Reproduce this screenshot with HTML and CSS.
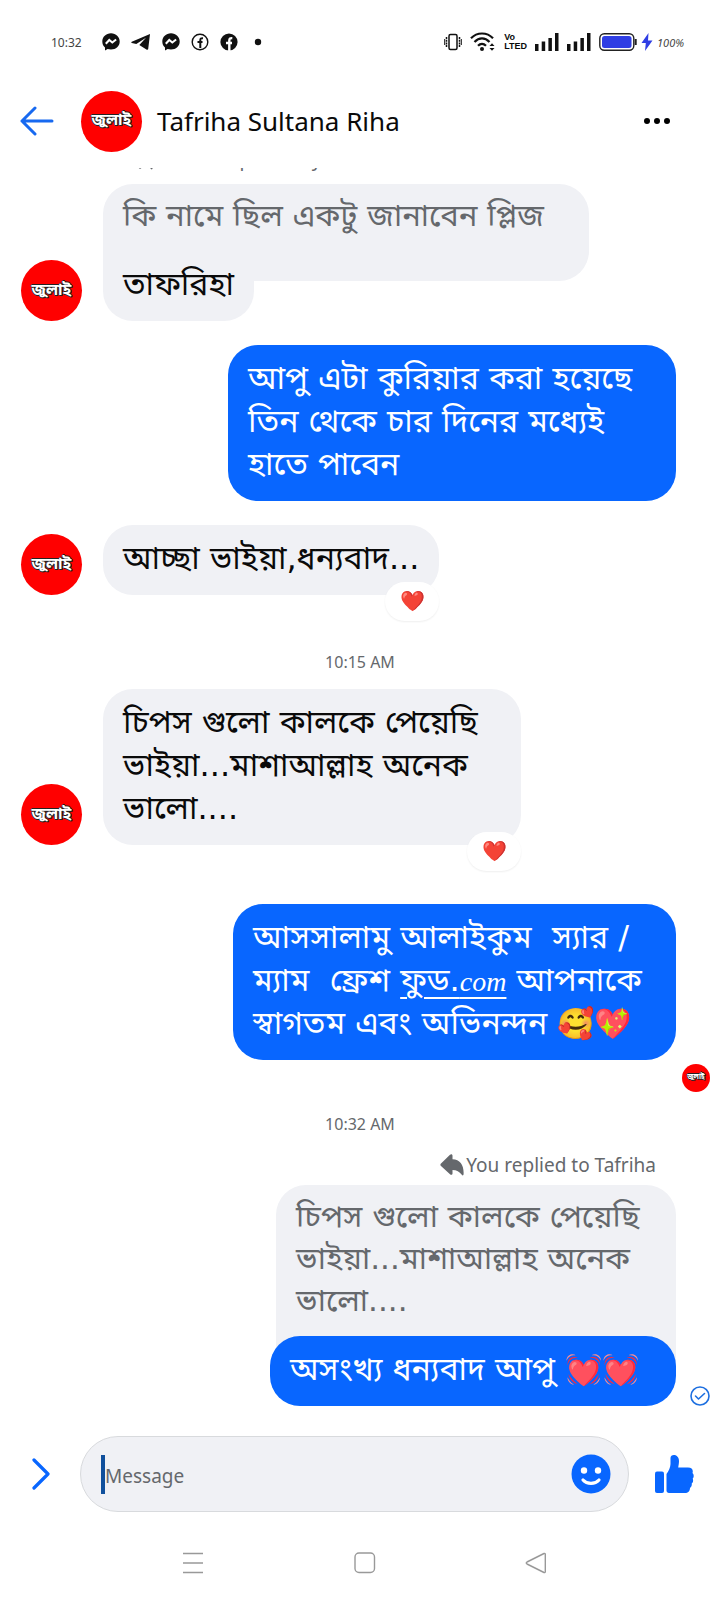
FILE: index.html
```html
<!DOCTYPE html>
<html lang="bn">
<head>
<meta charset="utf-8">
<meta name="viewport" content="width=device-width, initial-scale=1">
<title>Tafriha Sultana Riha</title>
<link rel="stylesheet" href="styles.css">
</head>
<body>
<svg class="defs" width="0" height="0" aria-hidden="true">
  <symbol id="messenger" viewBox="0 0 18 18"><path fill="#111" d="M9 .3C4 .3.3 3.900.3 8.600c0 2.500 1 4.500 2.700 6v2.800l2.600-1.400c1 .3 2.200.5 3.400.5 5 0 8.700-3.500 8.700-8S14 .3 9 .3z"/><path d="M3.800 10.800 7.300 7l3 2.500 3.800-3" fill="none" stroke="#fff" stroke-width="2"/></symbol>
  <symbol id="reply" viewBox="0 0 24 22"><path fill="#65686c" d="M1 9.500 10 .8c1.200-1 2.500-.5 2.500 1v3.400C20 5.500 24 11 23.600 20c0 1.500-1 1.800-1.800.8-2.500-3.300-5-4.600-9.300-4.800v3.200c0 1.600-1.300 2-2.500 1L1 12c-.8-.8-.8-1.700 0-2.500z"/></symbol>
</svg>
<div class="app">
  <div class="status">
    <div class="status-group notices">
      <span class="clock">10:32</span>
      <svg width="18" height="18"><use href="#messenger"/></svg>
      <svg width="20" height="18" viewBox="0 0 20 18"><path fill="#111" d="M19 1 .8 8.800c-.7.3-.6.9 0 1.100l4.500 1.200L15 4.800 8.300 12l7.500 4.700c.8.4 1.200 0 1.400-.7z"/></svg>
      <svg width="18" height="18"><use href="#messenger"/></svg>
      <svg width="18" height="18" viewBox="0 0 18 18"><circle cx="9" cy="9" r="7.800" fill="none" stroke="#111" stroke-width="1.400"/><path d="M9.300 15V7.200c0-1.500.7-2.200 2.700-2M6.500 9h5" fill="none" stroke="#111" stroke-width="2"/></svg>
      <svg width="18" height="18" viewBox="0 0 18 18"><circle cx="9" cy="9" r="8.600" fill="#111"/><path d="M9.300 18V7.400c0-1.700 1-2.400 3-2.200M6 10h6" fill="none" stroke="#fff" stroke-width="2.400"/></svg>
      <svg width="18" height="18" viewBox="0 0 18 18"><circle cx="9" cy="9" r="3.200" fill="#111"/></svg>
    </div>
    <div class="status-group">
      <svg width="18" height="18" viewBox="0 0 18 18"><rect x="5" y="1.500" width="8" height="15" rx="1.500" fill="none" stroke="#111" stroke-width="1.500"/><path d="M2.500 4v10M15.500 4v10" stroke="#111" stroke-width="1.500" stroke-dasharray="2 .7"/><path d="M.7 6v6M17.300 6v6" stroke="#111" stroke-width="1"/></svg>
      <svg width="26" height="20" viewBox="0 0 26 20"><g fill="none" stroke="#111" stroke-width="2.200"><path d="M1 6.300C7-.1 17-.1 23 6.300"/><path d="M4.500 10C9 5.200 15 5.200 19.500 10"/><path d="M8 13.800c2.500-2.600 5.500-2.600 8 0"/></g><circle cx="12" cy="17" r="2" fill="#111"/><path d="m19.500 14 2.500-2.700 2.500 2.700zM19.500 16l2.500 2.700 2.500-2.700z" fill="#111"/></svg>
      <span class="volte">Vo<br>LTED</span>
      <svg width="24" height="18" viewBox="0 0 24 18"><path fill="#111" d="M0 11h3.500v7H0zM6.700 8.500h3.500V18H6.700zM13.400 5h3.500v13h-3.500zM20 0h3.500v18H20z"/></svg>
      <svg width="24" height="18" viewBox="0 0 24 18"><path fill="#111" d="M0 11h3.500v7H0zM6.700 8.500h3.500V18H6.700zM13.400 5h3.500v13h-3.500zM20 0h3.500v18H20z"/></svg>
      <div class="status-group battery">
        <svg width="38" height="18" viewBox="0 0 38 18"><rect x=".8" y=".8" width="34" height="16.400" rx="4.500" fill="none" stroke="#222" stroke-width="1.400"/><rect x="3" y="3" width="29.500" height="12" rx="2.500" fill="#2f3ee4"/><path d="M36.700 6v6" stroke="#222" stroke-width="2"/></svg>
        <svg width="12" height="18" viewBox="0 0 12 18"><path fill="#2f3ee4" d="M7.500 0 .5 10h4.300L4 18l7.500-10.500H7z"/></svg>
        <span class="percent">100%</span>
      </div>
    </div>
  </div>

  <header class="header">
    <button class="icon-button back" aria-label="Back"><svg width="34" height="30" viewBox="0 0 34 30" fill="none" stroke="#1769f0" stroke-width="3" stroke-linecap="round" stroke-linejoin="round"><path d="M32 15H2M15 2 2 15l13 13"/></svg></button>
    <span class="avatar">জুলাই</span>
    <h1 class="name">Tafriha Sultana Riha</h1>
    <button class="icon-button" aria-label="More"><svg width="26" height="8" viewBox="0 0 26 8" fill="#000"><circle cx="3" cy="4" r="3"/><circle cx="13" cy="4" r="3"/><circle cx="23" cy="4" r="3"/></svg></button>
  </header>

  <main class="thread">
    <div class="theirs">
      <span class="avatar">জুলাই</span>
      <div class="stack">
        <p class="label"><svg width="24" height="22"><use href="#reply"/></svg>Tafriha replied to you</p>
        <p class="bubble quote size-xl">কি নামে ছিল একটু জানাবেন প্লিজ</p>
        <p class="bubble answer">তাফরিহা</p>
      </div>
    </div>

    <div class="mine">
      <p class="bubble size-l">আপু এটা কুরিয়ার করা হয়েছে<br>তিন থেকে চার দিনের মধ্যেই<br>হাতে পাবেন</p>
    </div>

    <div class="theirs">
      <span class="avatar">জুলাই</span>
      <p class="bubble">আচ্ছা ভাইয়া,ধন্যবাদ...<span class="reaction">❤️</span></p>
    </div>

    <p class="time first">10:15 AM</p>

    <div class="theirs">
      <span class="avatar">জুলাই</span>
      <p class="bubble size-m">চিপস গুলো কালকে পেয়েছি<br>ভাইয়া...মাশাআল্লাহ অনেক<br>ভালো....<span class="reaction">❤️</span></p>
    </div>

    <div class="mine greeting">
      <p class="bubble size-l">আসসালামু আলাইকুম &nbsp;স্যার /<br>ম্যাম &nbsp;ফ্রেশ <a class="link" href="#">ফুড.<i>com</i></a> আপনাকে<br>স্বাগতম এবং অভিনন্দন <span class="emoji">🥰<span class="red">💖</span></span></p>
    </div>
    <span class="avatar seen">জুলাই</span>

    <p class="time">10:32 AM</p>

    <div class="mine">
      <div class="stack">
        <p class="label"><svg width="24" height="22"><use href="#reply"/></svg>You replied to Tafriha</p>
        <p class="bubble quote size-s">চিপস গুলো কালকে পেয়েছি<br>ভাইয়া...মাশাআল্লাহ অনেক<br>ভালো....</p>
        <p class="bubble answer size-s">অসংখ্য ধন্যবাদ আপু <span class="emoji red">💓💓</span></p>
      </div>
      <svg class="sent" width="20" height="20" viewBox="0 0 20 20" fill="none" stroke="#1d6fe0" stroke-width="1.600"><circle cx="10" cy="10" r="9"/><path d="m5.500 10 3 3 6-5.500" stroke-linecap="round" stroke-linejoin="round"/></svg>
    </div>
  </main>

  <form class="composer">
    <button type="button" class="icon-button expand" aria-label="Show actions"><svg width="18" height="32" viewBox="0 0 18 32" fill="none" stroke="#0866ff" stroke-width="3.200" stroke-linecap="round" stroke-linejoin="round"><path d="m2 2 14 14L2 30"/></svg></button>
    <div class="field">
      <span class="caret"></span>
      <input class="input" type="text" placeholder="Message" aria-label="Message">
      <button type="button" class="icon-button" aria-label="Emoji"><svg width="40" height="40" viewBox="0 0 40 40"><circle cx="20" cy="20" r="19.500" fill="#0866ff"/><circle cx="13" cy="16.500" r="3.200" fill="#fff"/><circle cx="27" cy="16.500" r="3.200" fill="#fff"/><path d="M12 26c4 4.500 12 4.500 16 0" fill="none" stroke="#fff" stroke-width="3.200" stroke-linecap="round"/></svg></button>
    </div>
    <button type="button" class="icon-button" aria-label="Like"><svg width="40" height="40" viewBox="0 0 40 40" fill="#0866ff"><rect x="1" y="17.500" width="9" height="21.500" rx="2"/><path d="M12.500 20c2-3 4-6.500 4-10V4c0-4.500 8.500-4 8.500 3 0 2.500-.5 4.500-.8 6.500H34c4 0 5.500 2.500 4.500 5.500 1.600 1.600 1.600 4 .2 5.500.8 2 .4 4-1 5 .4 2-.4 3.600-1.700 4.500 0 3-2 5-5 5H15c-1.500 0-2.500-1-2.500-2.500z"/></svg></button>
  </form>

  <nav class="system">
    <button class="icon-button" aria-label="Recent apps"><svg width="22" height="22" viewBox="0 0 22 22" stroke="#999" stroke-width="1.600"><path d="M1 1.500h20M1 11h20M1 20.500h20"/></svg></button>
    <button class="icon-button" aria-label="Home"><svg width="22" height="22" viewBox="0 0 22 22" fill="none" stroke="#999" stroke-width="1.400"><rect x="1" y="1" width="19.500" height="19.500" rx="4"/></svg></button>
    <button class="icon-button" aria-label="Back"><svg width="22" height="22" viewBox="0 0 22 22" fill="none" stroke="#999" stroke-width="1.400" stroke-linejoin="round"><path d="M19 1.500 2 10c-1 .6-1 1.400 0 2l17 8.500c.8.300 1.300 0 1.300-.8V2.300c0-.8-.5-1.100-1.300-.8z"/></svg></button>
  </nav>
</div>
</body>
</html>
```
FILE: styles.css
```css
* { box-sizing: border-box; }
body { margin: 0; background: #fff; color: #0a0a0a; font-family: "Noto Sans", sans-serif; }
p, h1 { margin: 0; }
svg { display: block; flex: none; }
.defs { position: absolute; }
.app { display: flex; flex-direction: column; height: 100vh; overflow: hidden; }
.icon-button { display: flex; flex: none; padding: 0; border: 0; background: none; }

.status { display: flex; flex: none; align-items: center; justify-content: space-between; height: 84px; padding: 0 36px 0 51px; }
.status-group { display: flex; align-items: center; gap: 8px; }
.notices { gap: 11px; }
.battery { gap: 4px; }
.clock { width: 40px; color: #444; font-size: 12px; }
.percent { color: #444; font-size: 11px; font-style: italic; }
.volte { font: bold 9px/9px "Liberation Sans", sans-serif; }

.header { display: flex; flex: none; align-items: center; height: 84px; padding: 0 50px 10px 20px; }
.back { margin-right: 27px; }
.name { flex: 1; margin-left: 15px; font-size: 26px; font-weight: 400; line-height: 32px; }
.avatar {
  display: flex; flex: none; align-items: center; justify-content: center;
  width: 61px; height: 61px; border-radius: 50%; background: #f00; color: #fff;
  font: bold 16px/24px "Noto Sans Bengali", sans-serif;
  text-shadow: 1px 0 #222, -1px 0 #222, 0 1px #222, 0 -1px #222, 1px 1px #222;
}

.thread { display: flex; flex: 1; flex-direction: column; justify-content: flex-end; min-height: 0; overflow: hidden; padding-bottom: 14px; }
.theirs { display: flex; flex: none; align-items: flex-end; gap: 21px; padding-left: 21px; }
.mine { display: flex; flex: none; align-items: flex-end; justify-content: flex-end; gap: 14px; margin: 24px 0; padding-right: 44px; }
.stack { display: flex; flex-direction: column; align-items: flex-start; }
.mine .stack { align-items: flex-end; }
.bubble {
  position: relative; padding: 12px 20px 15px; border-radius: 30px; background: #f0f1f5;
  font: 32px/43px "DejaVu Sans", "Noto Sans Bengali", sans-serif; white-space: nowrap;
}
.mine .bubble { background: #0866ff; color: #fff; }
.mine .bubble.quote, .bubble.quote { padding: 10px 20px 45px; background: #f0f1f5; color: #65686c; font-size: 31px; line-height: 42px; }
.size-s { min-width: 400px; }
.size-m { min-width: 418px; }
.size-l { min-width: 448px; }
.size-xl { min-width: 486px; }
.greeting .size-l { min-width: 443px; }
.answer { margin-top: -30px; }
.answer.size-s { min-width: 406px; }
.theirs .quote { border-bottom-left-radius: 0; }
.theirs .answer { border-top-left-radius: 0; border-top-right-radius: 0; }
.mine .quote { border-bottom-left-radius: 0; border-bottom-right-radius: 0; }
.label { display: flex; align-items: center; gap: 2px; padding: 0 20px 8px 26px; color: #65686c; font-size: 19px; line-height: 24px; }
.theirs .label { padding-bottom: 13px; }
.reaction {
  position: absolute; right: 0; bottom: -26px; width: 54px; height: 39px; border-radius: 20px;
  background: #fff; box-shadow: 0 1px 2px #0001; font-size: 20px; line-height: 38px; text-align: center;
}
.time { flex: none; color: #65686c; font-size: 16px; line-height: 24px; text-align: center; }
.time.first { margin: 55px 0 15px; }
.greeting { margin: 59px 0 4px; }
.link { color: inherit; text-decoration-thickness: 2px; text-underline-offset: 6px; }
.link i { font: italic 28px/24px "Liberation Serif", serif; }
.emoji { font-size: 30px; line-height: 32px; }
.red { filter: hue-rotate(22deg) saturate(1.3); }
.seen { align-self: flex-end; width: 28px; height: 28px; margin: 0 10px 20px 0; font-size: 7px; line-height: 12px; }
.time + .mine { margin: 17px 0 0; padding-right: 10px; }

.composer { display: flex; flex: none; align-items: center; gap: 25px; padding: 16px 26px 0 32px; }
.expand { margin-right: 5px; }
.field { display: flex; flex: 1; align-items: center; height: 76px; padding: 0 17px 0 20px; border: 1px solid #d8dadd; border-radius: 38px; background: #f0f1f5; }
.caret { width: 4px; height: 39px; background: #10509c; }
.input { flex: 1; min-width: 0; padding: 4px 0 0; border: 0; outline: 0; background: none; font: 19px/28px "Noto Sans", sans-serif; }
.input::placeholder { color: #65686c; opacity: 1; }
.system { display: flex; flex: none; align-items: center; justify-content: space-between; height: 88px; padding: 14px 173px 0 182px; }
```
